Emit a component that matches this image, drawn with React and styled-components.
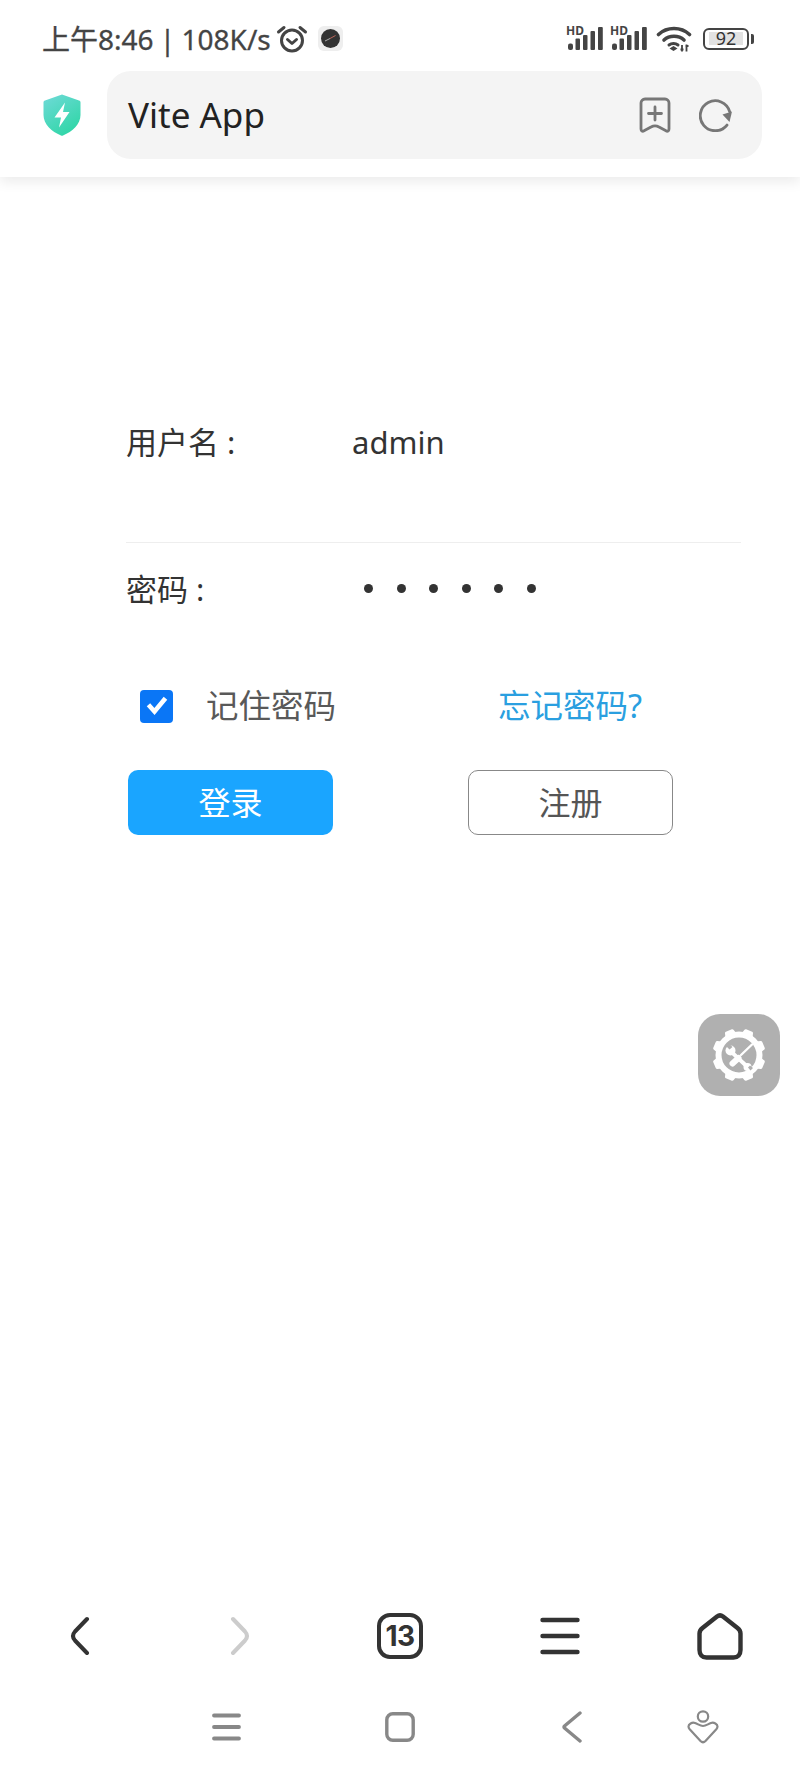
import React from "react";
import styled, { createGlobalStyle } from "styled-components";

const GlobalStyle = createGlobalStyle`
  html, body {
    margin: 0;
    padding: 0;
    background: #fff;
  }
  * {
    box-sizing: border-box;
  }
`

const FONT = `"Noto Sans", "Noto Sans CJK SC", sans-serif`

const HdSignal = () => (
  <SignalWrapper>
    <HdText>HD</HdText>
    <svg width="37" height="23" viewBox="0 0 37 23" fill="#444">
      <rect x="2" y="16.500" width="5" height="6.500" rx="2" />
      <rect x="9.500" y="11.500" width="4.500" height="11.500" rx="1" />
      <rect x="17" y="8" width="4.500" height="15" rx="1" />
      <rect x="24.500" y="4" width="4.500" height="19" rx="1" />
      <rect x="32" y="0" width="4.800" height="23" rx="1" />
    </svg>
  </SignalWrapper>
)

const AlarmIcon = () => (
  <svg width="32" height="28" viewBox="0 0 32 28" fill="none" stroke="#444" strokeWidth="3" strokeLinecap="round" strokeLinejoin="round">
    <circle cx="16" cy="15.500" r="10.500" />
    <path d="M11.500 14.500l4.500 4 4.500-4" />
    <path d="M2.500 7L8 2.500M29.500 7L24 2.500" />
  </svg>
)

const BadgeIcon = () => (
  <svg width="19" height="19" viewBox="0 0 19 19">
    <circle cx="9.500" cy="9.500" r="9.500" fill="#333" />
    <path d="M4 12L9 9.500" stroke="#bbb" strokeWidth="0.900" />
    <path d="M9 9.500L14.500 6.500" stroke="#c96a5c" strokeWidth="0.900" />
  </svg>
)

const WifiIcon = () => (
  <svg width="36" height="27" viewBox="0 0 36 27" fill="none" stroke="#444" strokeWidth="3.600" strokeLinecap="round">
    <path d="M2.500 9.500C11 1.500 25 1.500 33.500 9.500" />
    <path d="M8 15C13.500 10 22.500 10 28 15" />
    <path d="M13 20C15.500 18 19.500 18 22 20" strokeWidth="3" />
    <path d="M13.500 23.500l4-2.500 4 2.500-4 2.500z" fill="#444" stroke="none" />
    <path d="M26 20v6.500M24.500 24.500h3M30.500 19.500v7M29.500 21h3" strokeWidth="1.800" strokeLinecap="butt" />
  </svg>
)

const ShieldIcon = () => (
  <svg width="38" height="42" viewBox="0 0 38 42">
    <defs>
      <linearGradient id="shieldFill" x1="0.1" y1="0" x2="0.7" y2="1">
        <stop offset="0" stopColor="#6ddad6" />
        <stop offset="1" stopColor="#2fd6a6" />
      </linearGradient>
    </defs>
    <path d="M19 0.500L36 6.500c1 .4 1.500 1 1.500 2V21c0 9-8 16.500-17.500 20.500-.7.300-1.300.300-2 0C8.500 37.500.5 30 .5 21V8.500c0-1 .5-1.600 1.500-2z" fill="url(#shieldFill)" />
    <path d="M22 8.500L11.500 23.500h6.500L16 33.500l10.500-15.500H20z" fill="#fff" />
  </svg>
)

const BookmarkPlusIcon = () => (
  <svg width="32" height="36" viewBox="0 0 32 36" fill="none" stroke="#777" strokeWidth="2.800" strokeLinecap="round" strokeLinejoin="round">
    <path d="M6 2h20a4 4 0 0 1 4 4v26c0 2-1.500 2.800-3 1.800L20 30c-2.500-1.500-5.500-1.500-8 0L5 33.800c-1.500 1-3 .2-3-1.800V6a4 4 0 0 1 4-4z" />
    <path d="M16 10v13M9.500 16.500h13" />
  </svg>
)

const RefreshIcon = () => (
  <svg width="34" height="34" viewBox="0 0 34 34" fill="none">
    <path d="M31 15.500A15 15 0 1 0 26.500 28.500" stroke="#777" strokeWidth="2.800" strokeLinecap="round" transform="rotate(-8 17 17)" />
    <path d="M33 13.500L30.500 24 23.500 16.500z" fill="#777" />
  </svg>
)

const GearIcon = () => {
  const teeth = Array.from({ length: 8 }, (_, i) => i * 45 + 22.5)
  return (
    <svg width="56" height="56" viewBox="0 0 56 56">
      <circle cx="28" cy="28" r="20.500" fill="none" stroke="#fff" strokeWidth="6" />
      {teeth.map((angle) => (
        <path key={angle} d="M21.500 9L23.300 2.800c.2-.8.700-1.300 1.500-1.300h6.400c.8 0 1.300.5 1.500 1.300L34.500 9z" fill="#fff" transform={`rotate(${angle} 28 28)`} />
      ))}
      <path d="M41 17.500L30 28" stroke="#fff" strokeWidth="2.400" strokeLinecap="round" />
      <path d="M27.500 31L21.500 36.500" stroke="#fff" strokeWidth="6" strokeLinecap="round" />
      <path d="M21 25.500L35.500 39" stroke="#fff" strokeWidth="3.800" />
      <circle cx="19.500" cy="23.500" r="5" fill="#fff" />
      <path d="M18.500 22.500L15 19l2.500-3 4 4z" fill="#b0b0b0" />
      <circle cx="36.500" cy="40" r="4" fill="#fff" />
      <path d="M37 40.500l2.500 3 2.500-2.500-3-2.500z" fill="#b0b0b0" />
    </svg>
  )
}

const ChevronLeft = ({ color = "#333", width = 4 }) => (
  <svg width="20" height="40" viewBox="0 0 20 40" fill="none" stroke={color} strokeWidth={width} strokeLinecap="round" strokeLinejoin="round">
    <path d="M17 3L5 15.500c-2.500 2.800-2.500 6.200 0 9L17 37" />
  </svg>
)

const ChevronRight = ({ color = "#ccc", width = 4 }) => (
  <svg width="20" height="40" viewBox="0 0 20 40" fill="none" stroke={color} strokeWidth={width} strokeLinecap="round" strokeLinejoin="round">
    <path d="M3 3L15 15.500c2.500 2.800 2.500 6.200 0 9L3 37" />
  </svg>
)

const MenuIcon = () => (
  <svg width="40" height="38" viewBox="0 0 40 38" fill="none" stroke="#333" strokeWidth="4.400" strokeLinecap="round">
    <path d="M2.500 3h35M2.500 19h35M2.500 35h35" />
  </svg>
)

const HomeIcon = () => (
  <svg width="46" height="47" viewBox="0 0 46 47" fill="none" stroke="#333" strokeWidth="4.400" strokeLinejoin="round">
    <path d="M20 3.500c2-1.500 4-1.500 6 0l14.500 11.500c2 1.600 3 3 3 5.500V37c0 4.500-2.500 7.500-7 7.500H9.500c-4.500 0-7-3-7-7.500V20.500c0-2.500 1-3.900 3-5.500z" />
  </svg>
)

const SystemMenuIcon = () => (
  <svg width="30" height="30" viewBox="0 0 30 30" fill="none" stroke="#888" strokeWidth="3.800" strokeLinecap="round">
    <path d="M3 3.500h25M3 15h25M3 26.500h25" />
  </svg>
)

const SystemSquareIcon = () => (
  <svg width="30" height="30" viewBox="0 0 30 30" fill="none" stroke="#888" strokeWidth="3.400">
    <rect x="1.800" y="1.800" width="26.400" height="26.400" rx="6" />
  </svg>
)

const SystemBackIcon = () => (
  <svg width="20" height="32" viewBox="0 0 20 32" fill="none" stroke="#888" strokeWidth="3.400" strokeLinecap="round" strokeLinejoin="round">
    <path d="M18 2L2.500 15c-.7.600-.7 1.400 0 2L18 30" />
  </svg>
)

const SystemPersonIcon = () => (
  <svg width="32" height="34" viewBox="0 0 32 34" fill="none" stroke="#888" strokeWidth="2.200" strokeLinejoin="round">
    <circle cx="16" cy="6.500" r="5.200" />
    <path d="M16 16c3 0 5-2 8-3 3-1 6.500 1 6.500 3.500 0 1-.5 2-1.200 2.800L18.500 31c-1.500 1.500-3.500 1.500-5 0L2.700 19.300C2 18.500 1.500 17.500 1.500 16.500 1.500 14 5 12 8 13c3 1 5 3 8 3z" />
  </svg>
)

const App = () => {
  const passwordDots = [0, 1, 2, 3, 4, 5]

  return (
    <Page>
      <GlobalStyle />
      <TopArea>
        <StatusBar>
          <StatusLeft>
            <StatusText>上午8:46 | 108K/s</StatusText>
            <AlarmIcon />
            <AppBadge>
              <BadgeIcon />
            </AppBadge>
          </StatusLeft>
          <StatusRight>
            <HdSignal />
            <HdSignal />
            <WifiSlot>
              <WifiIcon />
            </WifiSlot>
            <Battery>
              <BatteryLevel>92</BatteryLevel>
              <BatteryNub />
            </Battery>
          </StatusRight>
        </StatusBar>
        <AddressRow>
          <ShieldIcon />
          <AddressBar>
            <PageTitle>Vite App</PageTitle>
            <AddressActions>
              <BookmarkPlusIcon />
              <RefreshIcon />
            </AddressActions>
          </AddressBar>
        </AddressRow>
      </TopArea>

      <Main>
        <Field divider>
          <FieldLabel>用户名 :</FieldLabel>
          <FieldValue>admin</FieldValue>
        </Field>
        <Field>
          <FieldLabel>密码 :</FieldLabel>
          <Dots>
            {passwordDots.map((dot) => <Dot key={dot} />)}
          </Dots>
        </Field>
        <OptionRow>
          <Remember>
            <CheckBox>
              <svg width="22" height="20" viewBox="0 0 22 20" fill="none" stroke="#fff" strokeWidth="4.600" strokeLinecap="square">
                <path d="M4 10.500l4.500 5L18 4" />
              </svg>
            </CheckBox>
            <RememberText>记住密码</RememberText>
          </Remember>
          <ForgotLink>忘记密码?</ForgotLink>
        </OptionRow>
        <ButtonRow>
          <ActionButton primary>登录</ActionButton>
          <ActionButton>注册</ActionButton>
        </ButtonRow>
      </Main>

      <FloatButton>
        <GearIcon />
      </FloatButton>

      <BottomArea>
        <BrowserNav>
          <NavSlot><ChevronLeft /></NavSlot>
          <NavSlot><ChevronRight /></NavSlot>
          <NavSlot><TabCount>13</TabCount></NavSlot>
          <NavSlot><MenuIcon /></NavSlot>
          <NavSlot><HomeIcon /></NavSlot>
        </BrowserNav>
        <SystemNav>
          <NavSlot><SystemMenuIcon /></NavSlot>
          <NavSlot><SystemSquareIcon /></NavSlot>
          <NavSlot><SystemBackIcon /></NavSlot>
          <NavSlot><SystemPersonIcon /></NavSlot>
        </SystemNav>
      </BottomArea>
    </Page>
  )
};

const Page = styled.div`
  position: relative;
  display: flex;
  flex-direction: column;
  width: 800px;
  height: 1778px;
  overflow: hidden;
  background: #fff;
  font-family: ${FONT};
`

const TopArea = styled.header`
  display: flex;
  flex-direction: column;
  height: 177px;
  background: #fff;
  box-shadow: 0 5px 12px rgba(0, 0, 0, 0.08);
`

const StatusBar = styled.div`
  display: flex;
  align-items: center;
  justify-content: space-between;
  height: 71px;
  padding: 6px 51px 0 42px;
`

const StatusLeft = styled.div`
  display: flex;
  align-items: center;
  gap: 5px;
`

const StatusText = styled.span`
  font-size: 28px;
  line-height: 32px;
  word-spacing: -1px;
  color: #444;
  -webkit-text-stroke: 0.3px #444;
`

const AppBadge = styled.div`
  display: flex;
  align-items: center;
  justify-content: center;
  width: 25px;
  height: 25px;
  margin-left: 5px;
  border-radius: 6px;
  background: #eee;
`

const StatusRight = styled.div`
  display: flex;
  align-items: center;
  gap: 7px;
`

const SignalWrapper = styled.div`
  position: relative;
  width: 37px;
  height: 23px;
`

const HdText = styled.span`
  position: absolute;
  top: -3px;
  left: 0;
  font-size: 12px;
  line-height: 13px;
  font-weight: 700;
  color: #444;
`

const WifiSlot = styled.div`
  display: flex;
  margin-left: 2px;
`

const Battery = styled.div`
  position: relative;
  display: flex;
  align-items: center;
  justify-content: center;
  width: 46px;
  height: 22px;
  margin-left: 4px;
  border: 2px solid #444;
  border-radius: 6px;
`

const BatteryLevel = styled.span`
  width: 34px;
  height: 13px;
  font-size: 18px;
  line-height: 13px;
  text-align: center;
  color: #333;
  background: #e2e2e2;
`

const BatteryNub = styled.div`
  position: absolute;
  top: 4px;
  right: -7px;
  width: 3px;
  height: 10px;
  border-radius: 0 2px 2px 0;
  background: #444;
`

const AddressRow = styled.div`
  display: flex;
  align-items: center;
  gap: 26px;
  padding: 0 38px 0 43px;
`

const AddressBar = styled.div`
  display: flex;
  flex: 1;
  align-items: center;
  justify-content: space-between;
  height: 88px;
  padding: 0 29px 0 21px;
  border-radius: 24px;
  background: #f4f4f4;
`

const PageTitle = styled.span`
  font-size: 35px;
  line-height: 44px;
  color: #222;
`

const AddressActions = styled.div`
  display: flex;
  align-items: center;
  gap: 28px;
`

const Main = styled.main`
  display: flex;
  flex-direction: column;
  padding: 245px 0 0 126px;
`

const Field = styled.div`
  display: grid;
  grid-template-columns: 226px 1fr;
  align-items: center;
  width: 615px;
  height: 40px;
  box-sizing: content-box;
  padding: ${({ divider }) => (divider ? "0 0 80px" : "26px 0 0")};
  border-bottom: ${({ divider }) => (divider ? "1px solid #eee" : "none")};
`

const FieldLabel = styled.span`
  font-size: 31px;
  line-height: 40px;
  color: #333;
`

const FieldValue = styled.span`
  font-size: 31px;
  line-height: 40px;
  color: #333;
`

const Dots = styled.div`
  display: flex;
  align-items: center;
  gap: 23.600px;
  padding: 0 0 2px 12px;
`

const Dot = styled.span`
  width: 9px;
  height: 9px;
  border-radius: 50%;
  background: #333;
`

const OptionRow = styled.div`
  display: flex;
  align-items: center;
  height: 40px;
  margin-top: 77px;
`

const Remember = styled.label`
  display: flex;
  align-items: center;
  gap: 33px;
  width: 372px;
  padding-left: 14px;
`

const CheckBox = styled.span`
  display: flex;
  align-items: center;
  justify-content: center;
  width: 33px;
  height: 33px;
  border-radius: 4px;
  background: #0a76f6;
`

const RememberText = styled.span`
  font-size: 32.500px;
  line-height: 40px;
  color: #595959;
`

const ForgotLink = styled.a`
  font-size: 32.500px;
  line-height: 40px;
  color: #2a9fe0;
`

const ButtonRow = styled.div`
  display: flex;
  gap: 135px;
  margin: 44px 0 0 2px;
`

const ActionButton = styled.button`
  width: 205px;
  height: 65px;
  padding: 0 0 4px;
  border: ${({ primary }) => (primary ? "none" : "1.500px solid #888")};
  border-radius: 10px;
  font-family: ${FONT};
  font-size: 32px;
  color: ${({ primary }) => (primary ? "#fff" : "#555")};
  background: ${({ primary }) => (primary ? "#1aa5ff" : "#fff")};
`

const FloatButton = styled.div`
  position: absolute;
  top: 1014px;
  right: 20px;
  display: flex;
  align-items: center;
  justify-content: center;
  width: 82px;
  height: 82px;
  border-radius: 22px;
  background: #b0b0b0;
`

const BottomArea = styled.footer`
  display: flex;
  flex-direction: column;
  margin-top: auto;
  padding-bottom: 2px;
`

const BrowserNav = styled.nav`
  display: grid;
  grid-template-columns: repeat(5, 160px);
  height: 84px;
`

const SystemNav = styled.nav`
  display: grid;
  grid-template-columns: 172px 176px 168px 94px;
  height: 98px;
  padding-left: 140px;
`

const NavSlot = styled.div`
  display: flex;
  align-items: center;
  justify-content: center;
`

const TabCount = styled.div`
  display: flex;
  align-items: center;
  justify-content: center;
  width: 46px;
  height: 46px;
  border: 4.500px solid #333;
  border-radius: 13px;
  font-family: Inter, ${FONT};
  font-size: 28px;
  font-weight: 700;
  letter-spacing: -0.500px;
  color: #333;
`

export default App;
